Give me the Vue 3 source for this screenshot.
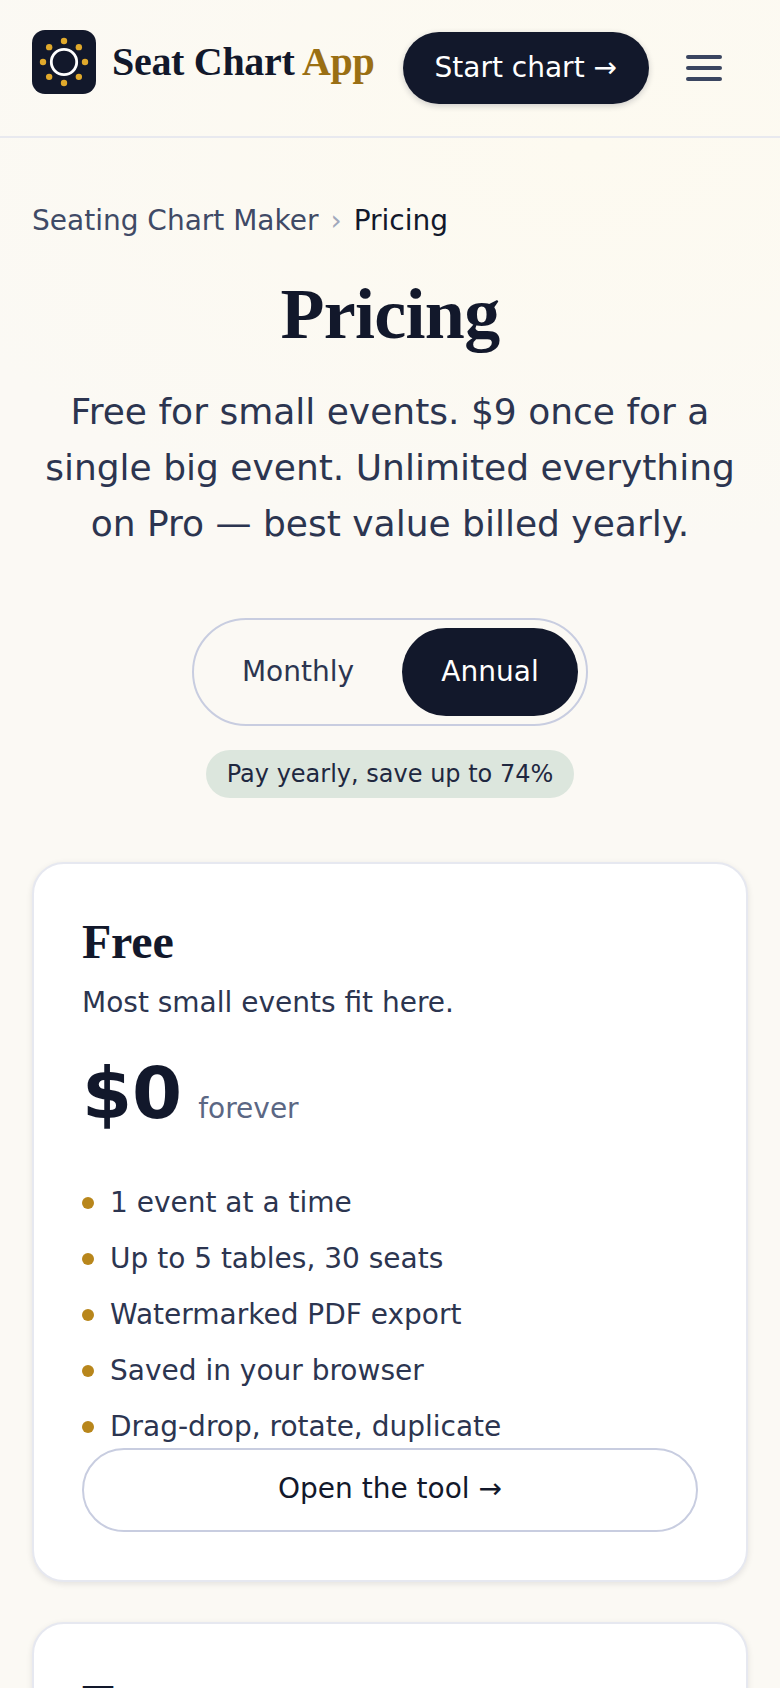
<template>
  <div class="page">
    <header class="topbar">
      <a class="brand">
        <svg class="logo" width="64" height="64" viewBox="0 0 64 64">
          <rect width="64" height="64" rx="13" fill="#12182b" />
          <circle cx="32" cy="32" r="12.7" fill="none" stroke="#fff" stroke-width="2.8" />
          <circle v-for="d in dots" :key="d.x + '-' + d.y" :cx="d.x" :cy="d.y" r="3.2" fill="#e0a92c" />
        </svg>
        <span class="brand-name">Seat Chart <em>App</em></span>
      </a>
      <a class="start">Start chart →</a>
      <button class="burger" aria-label="Menu"><i></i><i></i><i></i></button>
    </header>

    <main class="main">
      <nav class="crumbs">
        <a>Seating Chart Maker</a>
        <span class="sep">›</span>
        <span class="current">Pricing</span>
      </nav>

      <section class="intro">
        <h1>Pricing</h1>
        <p>Free for small events. $9 once for a single big event. Unlimited everything on Pro — best value billed yearly.</p>
      </section>

      <div class="billing">
        <div class="toggle">
          <button class="opt" :class="{ on: period === 'monthly' }" @click="period = 'monthly'">Monthly</button>
          <button class="opt" :class="{ on: period === 'annual' }" @click="period = 'annual'">Annual</button>
        </div>
        <span class="save">Pay yearly, save up to 74%</span>
      </div>

      <article class="card">
        <h2>Free</h2>
        <p class="blurb">Most small events fit here.</p>
        <div class="price"><strong>$0</strong><span>forever</span></div>
        <ul class="features">
          <li v-for="f in features" :key="f">{{ f }}</li>
        </ul>
        <a class="open">Open the tool →</a>
      </article>

      <article class="card">
        <h2>Team</h2>
      </article>
    </main>
  </div>
</template>

<script setup>
import { ref } from 'vue';

const period = ref('annual');

const features = [
  '1 event at a time',
  'Up to 5 tables, 30 seats',
  'Watermarked PDF export',
  'Saved in your browser',
  'Drag-drop, rotate, duplicate',
];

// eight seats round the table
const dots = Array.from({ length: 8 }, (_, i) => {
  const a = (i * Math.PI) / 4;
  return { x: 32 + 21 * Math.cos(a), y: 32 + 21 * Math.sin(a) };
});
</script>

<style>
html, body {
  margin: 0;
  background: #fbf9f4;
}
</style>

<style scoped>
.page {
  height: 1688px;
  overflow: hidden;
  font-family: "DejaVu Sans", sans-serif;
  color: #12182b;
  background: radial-gradient(700px 400px at 75% 150px, #fdfaf0, #fbf9f4);
}

.topbar {
  display: flex;
  align-items: center;
  height: 138px;
  padding: 0 32px;
  box-sizing: border-box;
  border-bottom: 2px solid #e8e9ef;
}

.brand {
  display: flex;
  align-items: center;
  gap: 16px;
  margin-top: -12px;
}

.logo {
  display: block;
}

.brand-name {
  margin-top: -2px;
  font-family: "Liberation Serif", serif;
  font-weight: 700;
  font-size: 40px;
  letter-spacing: -0.3px;
  white-space: nowrap;
}

.brand-name em {
  font-style: normal;
  color: #9a6f14;
}

.start {
  margin-left: 28px;
  height: 72px;
  padding: 0 32px 2px;
  box-sizing: border-box;
  display: flex;
  align-items: center;
  font-size: 28px;
  color: #fff;
  white-space: nowrap;
  background: #12182b;
  border-radius: 36px;
  box-shadow: 0 2px 6px rgba(18, 24, 43, 0.2);
}

.burger {
  margin-left: 37px;
  width: 36px;
  padding: 0;
  border: 0;
  background: none;
  display: flex;
  flex-direction: column;
  gap: 7px;
}

.burger i {
  display: block;
  height: 4px;
  border-radius: 2px;
  background: #3a4560;
}

.main {
  padding: 61px 32px 0;
}

.crumbs {
  display: flex;
  align-items: center;
  gap: 12px;
  font-size: 28px;
  line-height: 44px;
  color: #3f4a66;
}

.sep {
  color: #a0a8bc;
}

.current {
  color: #12182b;
}

.intro {
  text-align: center;
}

h1 {
  margin: 27px 0 0;
  font-family: "Liberation Serif", serif;
  font-size: 72px;
  line-height: 88px;
  font-weight: 700;
  letter-spacing: -0.01em;
}

.intro p {
  margin: 26px 0 0;
  font-size: 36px;
  line-height: 56px;
  color: #2c3550;
}

.billing {
  display: flex;
  flex-direction: column;
  align-items: center;
  margin-top: 66px;
}

.toggle {
  display: flex;
  width: 396px;
  height: 108px;
  padding: 8px 8px 8px 0;
  box-sizing: border-box;
  border: 2px solid #c8cde0;
  border-radius: 54px;
}

.opt {
  flex: 1;
  padding: 0 0 2px;
  border: 0;
  border-radius: 44px;
  background: none;
  font-family: inherit;
  font-size: 28px;
  color: #2c3550;
}

.opt.on {
  flex: 0 0 176px;
  background: #12182b;
  color: #fff;
}

.save {
  margin-top: 24px;
  height: 48px;
  padding: 0 21px;
  display: flex;
  align-items: center;
  font-size: 24px;
  color: #1f2840;
  background: #dce6dd;
  border-radius: 24px;
}

.card {
  margin-top: 64px;
  padding: 50px 48px 48px;
  background: #fff;
  border: 2px solid #e6e8f0;
  border-radius: 32px;
  box-shadow: 0 2px 6px rgba(18, 24, 43, 0.1);
}

.card + .card {
  margin-top: 40px;
}

h2 {
  margin: 0;
  font-family: "Liberation Serif", serif;
  font-size: 48px;
  line-height: 56px;
  font-weight: 700;
  letter-spacing: -0.2px;
}

.blurb {
  margin: 11px 0 0;
  font-size: 28px;
  line-height: 44px;
  color: #2c3550;
}

.price {
  display: flex;
  align-items: baseline;
  gap: 16px;
  margin-top: 20px;
}

.price strong {
  font-size: 72px;
  line-height: 96px;
}

.price span {
  font-size: 28px;
  color: #5b6784;
}

.features {
  list-style: none;
  margin: 34px 0 0;
  padding: 0;
  height: 273px;
}

.features li {
  position: relative;
  padding-left: 28px;
  font-size: 28px;
  line-height: 56px;
  color: #2c3550;
}

.features li::before {
  content: "";
  position: absolute;
  left: 0;
  top: 22px;
  width: 12px;
  height: 12px;
  border-radius: 50%;
  background: #b8861b;
}

.open {
  display: flex;
  justify-content: center;
  align-items: center;
  height: 84px;
  padding-bottom: 3px;
  box-sizing: border-box;
  font-size: 28px;
  border: 2px solid #c8cde0;
  border-radius: 42px;
}
</style>
